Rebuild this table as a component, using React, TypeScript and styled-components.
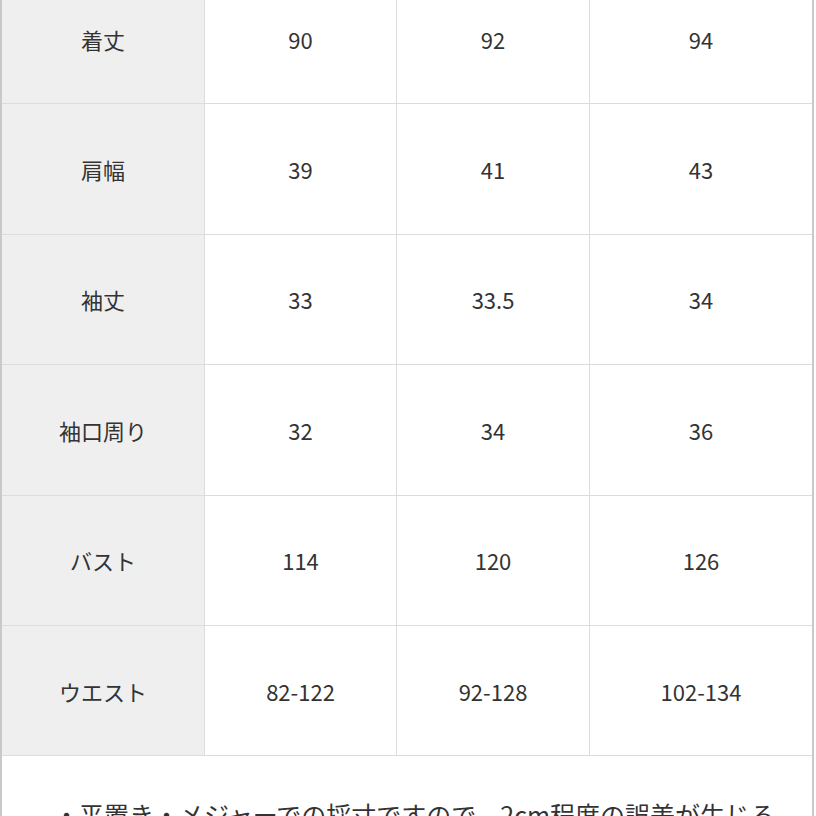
import React from "react";
import styled, { createGlobalStyle } from "styled-components";

const GlobalStyle = createGlobalStyle`
  html, body {
    margin: 0;
    padding: 0;
    background: #ffffff;
    overflow: hidden;
  }
  body {
    font-family: "Noto Sans CJK JP", "Noto Sans", sans-serif;
    color: #333333;
  }
`;

const Frame = styled.div`
  width: 810px;
  height: 816px;
  overflow: hidden;
  border-left: 2px solid #c9c9c9;
  border-right: 2px solid #c9c9c9;
  background: #ffffff;
`;

const SizeTable = styled.div`
  margin-top: -26px;
  display: grid;
  grid-template-columns: 203px 192px 193px 1fr;
`;

const Cell = styled.div<{ $head?: boolean }>`
  height: 130.4px;
  display: flex;
  align-items: center;
  justify-content: center;
  font-size: 22px;
  line-height: 1;
  color: #333333;
  background: ${(p) => (p.$head ? "#efefef" : "#ffffff")};
  border-bottom: 1px solid #dcdcdc;
  border-right: 1px solid #dcdcdc;
  box-sizing: border-box;

  &:nth-child(4n) {
    border-right: none;
  }
`;

const Note = styled.div`
  padding: 40px 0 0 52px;
  font-size: 25px;
  line-height: 36px;
  color: #333333;
  white-space: nowrap;
`;

const rows: [string, string, string, string][] = [
  ["着丈", "90", "92", "94"],
  ["肩幅", "39", "41", "43"],
  ["袖丈", "33", "33.5", "34"],
  ["袖口周り", "32", "34", "36"],
  ["バスト", "114", "120", "126"],
  ["ウエスト", "82-122", "92-128", "102-134"],
];

export default function App() {
  return (
    <>
      <GlobalStyle />
      <Frame>
        <SizeTable>
          {rows.map((r) => (
            <React.Fragment key={r[0]}>
              <Cell $head>{r[0]}</Cell>
              <Cell>{r[1]}</Cell>
              <Cell>{r[2]}</Cell>
              <Cell>{r[3]}</Cell>
            </React.Fragment>
          ))}
        </SizeTable>
        <Note>・平置き・メジャーでの採寸ですので、2cm程度の誤差が生じる</Note>
      </Frame>
    </>
  );
}
